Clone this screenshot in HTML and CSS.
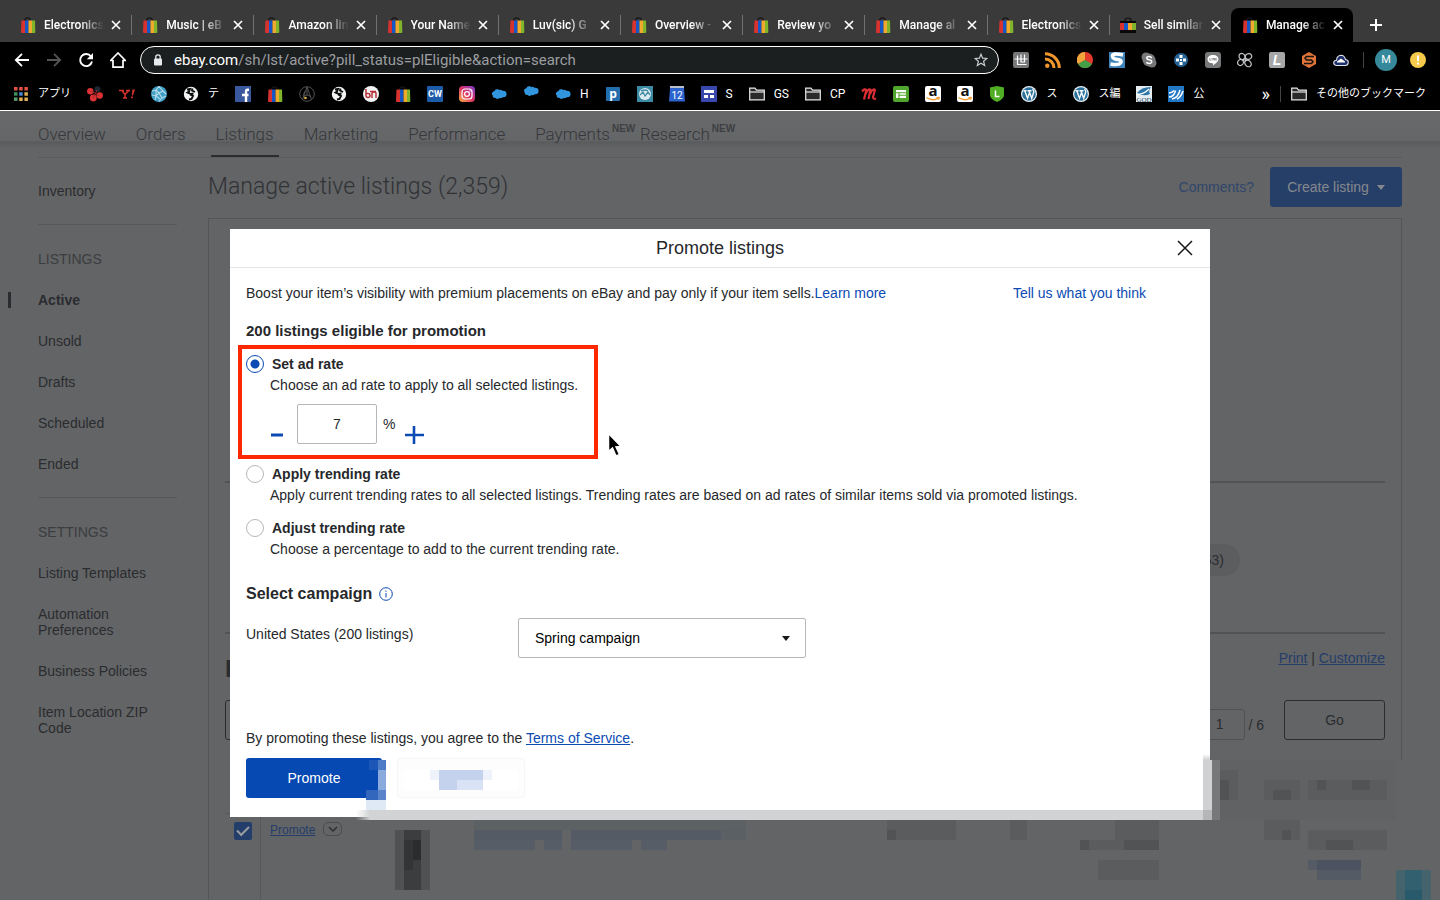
FILE: index.html
```html
<!DOCTYPE html>
<html lang="en">
<head>
    <meta charset="UTF-8">
    <meta name="viewport" content="width=device-width, initial-scale=1.0">
    <title>Manage active listings</title>
    <link rel="stylesheet" href="styles.css">
</head>
<body>

<!-- Shared icons -->
<svg class="sprite" aria-hidden="true">
    <symbol id="bag" viewBox="0 0 16 16">
        <path d="M4.500 5V3.500Q5 .8 7.500 .8T10.500 3.500V5" fill="none" stroke="#161616" stroke-width="1.200"/>
        <path d="M1.500 3.500H5V16H2Q1 16 1 15z" fill="#d8322f"/>
        <path d="M5 3.500h3.500V16H5z" fill="#1657c8"/>
        <path d="M8.500 3.500H12V16H8.500z" fill="#f0a92c"/>
        <path d="M12 3.500h3L15.300 15q0 1-1 1H12z" fill="#7fb52a"/>
    </symbol>
    <symbol id="x" viewBox="0 0 10 10"><path d="M1 1l8 8M9 1L1 9" stroke="currentColor" stroke-width="1.700" fill="none"/></symbol>
    <symbol id="globe" viewBox="0 0 16 16">
        <circle cx="8" cy="8" r="7.200" fill="#f3f4f5"/>
        <path d="M4 3.500L7 3 6 5.500 4.500 6.500 8 8l2.500-.5M9.500 2.500L9 4.500l3 1.500M7 8.500l3 1.500L8.500 13 6 13.500" fill="none" stroke="#0b0b0b" stroke-width="1.900"/>
    </symbol>
    <symbol id="cloud" viewBox="0 0 16 16"><path d="M1 8.200Q.8 5.500 3.300 5.200 4 3 6.200 3.200 7.700 2.900 8.500 4.200 10 3.200 11.500 4.800 15.600 4.600 15.600 8.200 15.400 11.500 11.700 11.200 10.300 12.800 8.300 12 6.500 14 4.700 12 1.500 12.200 1.800 9.800z" fill="#3196dd"/></symbol>
    <symbol id="folder" viewBox="0 0 16 16"><path d="M.7 13.800V2.200H6L7.500 4.200h7.800v9.600z" fill="#2a2a2a" stroke="#e8e8e8" stroke-width="1.200"/><path d="M.7 6h14.600" stroke="#e8e8e8" stroke-width="1.200"/></symbol>
    <symbol id="wp" viewBox="0 0 16 16"><circle cx="8" cy="8" r="8" fill="#e9f2f7"/><circle cx="8" cy="8" r="6.800" fill="#2a709a"/><path d="M2.500 4.800h3M6.500 4.800h4M3.800 4.800l2.700 7.500 2-5.500M8 4.800l2.700 7.500L12.800 6Q12.500 4 11.500 3" fill="none" stroke="#f4f8fa" stroke-width="1.400"/></symbol>
</svg>

<header class="browser">
    <div class="tab-strip">
        <div class="tabs">
            <div class="tab"><svg class="icon"><use href="#bag"/></svg><span class="tab-title">Electronics</span><button class="tab-close" aria-label="Close tab"><svg><use href="#x"/></svg></button></div>
            <div class="tab"><svg class="icon"><use href="#bag"/></svg><span class="tab-title">Music | eB</span><button class="tab-close" aria-label="Close tab"><svg><use href="#x"/></svg></button></div>
            <div class="tab"><svg class="icon"><use href="#bag"/></svg><span class="tab-title">Amazon lin</span><button class="tab-close" aria-label="Close tab"><svg><use href="#x"/></svg></button></div>
            <div class="tab"><svg class="icon"><use href="#bag"/></svg><span class="tab-title">Your Name</span><button class="tab-close" aria-label="Close tab"><svg><use href="#x"/></svg></button></div>
            <div class="tab"><svg class="icon"><use href="#bag"/></svg><span class="tab-title">Luv(sic) G</span><button class="tab-close" aria-label="Close tab"><svg><use href="#x"/></svg></button></div>
            <div class="tab"><svg class="icon"><use href="#bag"/></svg><span class="tab-title">Overview -</span><button class="tab-close" aria-label="Close tab"><svg><use href="#x"/></svg></button></div>
            <div class="tab"><svg class="icon"><use href="#bag"/></svg><span class="tab-title">Review yo</span><button class="tab-close" aria-label="Close tab"><svg><use href="#x"/></svg></button></div>
            <div class="tab"><svg class="icon"><use href="#bag"/></svg><span class="tab-title">Manage al</span><button class="tab-close" aria-label="Close tab"><svg><use href="#x"/></svg></button></div>
            <div class="tab"><svg class="icon"><use href="#bag"/></svg><span class="tab-title">Electronics</span><button class="tab-close" aria-label="Close tab"><svg><use href="#x"/></svg></button></div>
            <div class="tab">
                <svg class="icon" viewBox="0 0 16 16"><path d="M5 6V3Q5.500 1 8 1t3 2V6" fill="none" stroke="#111" stroke-width="1.200"/><path d="M0 4h16v12H0z" fill="#080808"/><path d="M0 6h4v7H0z" fill="#d8322f"/><path d="M4 6h4v7H4z" fill="#1657c8"/><path d="M8 6h4v7H8z" fill="#f0a92c"/><path d="M12 6h4v7h-4z" fill="#7fb52a"/></svg>
                <span class="tab-title">Sell similar</span><button class="tab-close" aria-label="Close tab"><svg><use href="#x"/></svg></button>
            </div>
            <div class="tab active"><svg class="icon"><use href="#bag"/></svg><span class="tab-title">Manage ac</span><button class="tab-close" aria-label="Close tab"><svg><use href="#x"/></svg></button></div>
        </div>
        <button class="new-tab" aria-label="New tab"><svg viewBox="0 0 12 12"><path d="M6 0v12M0 6h12" stroke="#fff" stroke-width="2"/></svg></button>
    </div>

    <div class="toolbar">
        <div class="nav-buttons">
            <button aria-label="Back"><svg class="icon" viewBox="0 0 16 16"><path d="M15 8H2M8 1.800L1.800 8 8 14.200" fill="none" stroke="#fff" stroke-width="1.800"/></svg></button>
            <button aria-label="Forward"><svg class="icon" viewBox="0 0 16 16"><path d="M1 8h13M8 1.800L14.200 8 8 14.200" fill="none" stroke="#555" stroke-width="1.800"/></svg></button>
            <button aria-label="Reload"><svg class="icon" viewBox="0 0 16 16"><path d="M13 4.500A6 6 0 1 0 14 9.500" fill="none" stroke="#fff" stroke-width="1.900"/><path d="M15 1v6.300H8.800z" fill="#fff"/></svg></button>
            <button aria-label="Home"><svg class="icon" viewBox="0 0 16 16"><path d="M.6 8.500L8 1l7.400 7.500H13V15.200H3V8.500z" fill="none" stroke="#fff" stroke-width="1.700"/></svg></button>
        </div>
        <div class="address">
            <svg class="lock" viewBox="0 0 10 12"><rect x="1" y="4.500" width="8" height="7" rx="1" fill="#e8eaed"/><path d="M2.800 5V3a2.200 2.200 0 0 1 4.400 0v2" fill="none" stroke="#e8eaed" stroke-width="1.300"/></svg>
            <span class="url"><b>ebay.com</b>/sh/lst/active?pill_status=plEligible&amp;action=search</span>
            <button aria-label="Bookmark this page"><svg class="star" viewBox="0 0 14 14"><path d="M7 1.200l1.600 4 4.300.3-3.300 2.800 1.100 4.200L7 10.200l-3.700 2.300 1.100-4.200L1.100 5.500l4.300-.3z" fill="none" stroke="#c9cbce" stroke-width="1.200"/></svg></button>
        </div>
        <div class="extensions">
            <svg class="icon" viewBox="0 0 16 16"><rect width="16" height="16" rx="2" fill="#77787a"/><path d="M1.500 7h13M4.500 3.500v9h9M8 2.500v8M11.500 2.500v8M8 10h3.500" fill="none" stroke="#fff" stroke-width="1.200"/></svg>
            <svg class="icon" viewBox="0 0 16 16"><circle cx="2.300" cy="13.700" r="2.200" fill="#f0952b"/><path d="M0 7a9 9 0 0 1 9 9M0 1.700A14.300 14.300 0 0 1 14.300 16" fill="none" stroke="#f0952b" stroke-width="3"/></svg>
            <svg class="icon" viewBox="0 0 16 16"><circle cx="8" cy="8" r="8" fill="#e23a2d"/><path d="M8 8V0A8 8 0 0 0 1 12z" fill="#f0a63a"/><path d="M8 8l-7 4a8 8 0 0 0 14 0z" fill="#43a047"/></svg>
            <svg class="icon" viewBox="0 0 16 16"><path d="M0 0h16v16H0z" fill="#3f83b8"/><path d="M14 3Q3 .5 3.500 4.500 4 7 8.500 7.500q5 .5 3 3.500-2 2.500-10 1" fill="none" stroke="#fff" stroke-width="3.600"/></svg>
            <svg class="icon" viewBox="0 0 16 16"><circle cx="5" cy="5" r="4.500" fill="#77787a"/><circle cx="11" cy="11" r="4.500" fill="#77787a"/><circle cx="8" cy="8" r="6.500" fill="#77787a"/><path d="M10.800 5.800Q8 3.700 6 5.200 5 7 8 7.800q3.500.7 2.500 2.700Q8.500 12.500 5.300 10.300" fill="none" stroke="#fff" stroke-width="1.500"/></svg>
            <svg class="icon" viewBox="0 0 16 16"><circle cx="8" cy="8" r="7" fill="#235f90"/><path d="M6.500 3h3v3h-3zM6.500 10h3v3h-3zM3 6.500h3v3H3zM10 6.500h3v3h-3zM7 7h2v2H7z" fill="#fff"/></svg>
            <svg class="icon" viewBox="0 0 16 16"><rect width="16" height="16" rx="3" fill="#77787a"/><path d="M8 3c3.500 0 5.500 2 5.500 4.300S10.500 11.500 8 13.500l.2-2C4.500 11.500 2.500 9.500 2.500 7.300S4.500 3 8 3z" fill="#fff"/><path d="M4.800 6v2.300H6M7 6v2.300M8.200 8.300V6l1.300 2.300V6M11.700 6.200h-1v2h1M10.700 7.200h1" fill="none" stroke="#77787a" stroke-width=".7"/></svg>
            <svg class="icon" viewBox="0 0 16 16"><g fill="none" stroke="#c3c4c6" stroke-width="1.200"><ellipse cx="5" cy="4.500" rx="2.800" ry="3.200" transform="rotate(-40 5 4.500)"/><ellipse cx="11.500" cy="4.500" rx="2.800" ry="3.200" transform="rotate(60 11.500 4.500)"/><ellipse cx="3.500" cy="10.500" rx="2.800" ry="3" transform="rotate(50 3.500 10.500)"/><ellipse cx="11" cy="11.500" rx="2.800" ry="3.500" transform="rotate(-40 11 11.500)"/><circle cx="7.500" cy="8" r="1.200"/></g></svg>
            <svg class="icon" viewBox="0 0 16 16"><rect width="16" height="16" rx="2" fill="#a5a6a8"/><text x="8" y="13" text-anchor="middle" font-family="Liberation Sans, sans-serif" font-weight="700" font-style="italic" font-size="14" fill="#fff">L</text></svg>
            <svg class="icon" viewBox="0 0 16 16"><path d="M8 0l7 4v8l-7 4-7-4V4z" fill="#e2743a"/><path d="M13 4.500H5.500L4 6l1.500 2h5L12 9.700 10.500 11.500H3" fill="none" stroke="#141414" stroke-width="1.600"/></svg>
            <svg class="icon" viewBox="0 0 16 16"><path d="M3.500 13.500Q.5 13 .7 10.500 1 8.300 3.500 8.200 4 3.500 8 3.300 11.500 3.500 12.500 7.500q3 .5 2.800 3-.3 3-3 3z" fill="#1d2f69" stroke="#dfe2ea" stroke-width="1.100"/><path d="M4 9.500L8 6.500l4 3v1H4z" fill="#fff"/></svg>
        </div>
        <span class="bar-line"></span>
        <span class="avatar">M</span>
        <svg class="icon" viewBox="0 0 16 16"><circle cx="8" cy="8" r="8" fill="#f4c94c"/><path d="M8 3.500v5.500M8 10.500v2" stroke="#fff" stroke-width="2"/></svg>
    </div>

    <nav class="bookmarks">
        <a href="#"><svg class="icon" viewBox="0 0 16 16"><path d="M1 1h3.500v3.500H1zM6.200 1h3.500v3.500H6.200zM11.400 1h3.500v3.500h-3.500z" fill="#e05242"/><path d="M1 6.200h3.500v3.500H1z" fill="#3f8f5a"/><path d="M6.200 6.200h3.500v3.500H6.200z" fill="#4b86d8"/><path d="M11.400 6.200h3.500v3.500h-3.500zM6.200 11.400h3.500v3.500H6.200zM11.400 11.400h3.500v3.500h-3.500z" fill="#e0ad55"/><path d="M1 11.400h3.500v3.500H1z" fill="#5b9a6c"/></svg><span class="jp">アプリ</span></a>
        <a href="#" aria-label="Bookmark"><svg class="icon" viewBox="0 0 16 16"><circle cx="3.300" cy="5.200" r="3.200" fill="#dc3235"/><circle cx="10.500" cy="3.300" r="3" fill="#1d2833"/><circle cx="12.700" cy="9.500" r="3.200" fill="#dc3235"/><circle cx="6.300" cy="12" r="3.400" fill="#dc3235"/><path d="M4 5l8 4.500M10 4L6.500 12" stroke="#a02a2d"/></svg></a>
        <a href="#" aria-label="Yahoo"><svg class="icon" viewBox="0 0 16 16"><path d="M0 4.500h5M7 4.500h4M3 4.500l3 4V12M10 4.500L6 8.500M4 12h4" fill="none" stroke="#d8332c" stroke-width="1.500"/><path d="M13.500 3.500H16l-2 6h-1.200zM12 10.500h1.800v1.700H12z" fill="#d8332c"/></svg></a>
        <a href="#" aria-label="Bookmark"><svg class="icon" viewBox="0 0 16 16"><circle cx="8" cy="8" r="8" fill="#3f9fc6"/><path d="M1 5l4-1 3 3 4-2 3 3M1 9l4 1 3-3 3 5 4-2M5 4L8 .5l4 4.500M5 10l-1 4M11 12l-3 3.500M5 4v6l4 3" fill="none" stroke="#b7dbe9" stroke-width="1.100"/></svg></a>
        <a href="#"><svg class="icon"><use href="#globe"/></svg><span class="jp">テ</span></a>
        <a href="#" aria-label="Facebook"><svg class="icon" viewBox="0 0 16 16"><path d="M0 0h16v16H0z" fill="#3a589e"/><path d="M11 16V9.500M7 9h6.500M14 3.800h-1.300Q11 3.800 11 6v5" fill="none" stroke="#fff" stroke-width="2.400"/></svg></a>
        <a href="#" aria-label="eBay"><svg class="icon"><use href="#bag"/></svg></a>
        <a href="#" aria-label="Bookmark"><svg class="icon" viewBox="0 0 16 16"><g fill="none" stroke="#525252"><circle cx="8" cy="8" r="7.300"/><path d="M8 1L3.500 13.500M8 1l4.500 12.500M8 1v8M4 11q4-4 8 0M6 5q-3 3 0 8"/></g><circle cx="6.500" cy="12" r="1.300" fill="#d8ad3c"/></svg></a>
        <a href="#" aria-label="Bookmark"><svg class="icon"><use href="#globe"/></svg></a>
        <a href="#" aria-label="Bookmark"><svg class="icon" viewBox="0 0 16 16"><circle cx="8" cy="8" r="8" fill="#f4f3f3"/><path d="M3 3v6.500a2 2 0 1 0 2-2H3M9 12V7q2.500-2 4 0v5M7 5.500h6" fill="none" stroke="#b7343b" stroke-width="1.500"/></svg></a>
        <a href="#" aria-label="eBay"><svg class="icon"><use href="#bag"/></svg></a>
        <a href="#" aria-label="CW"><svg class="icon" viewBox="0 0 16 16"><rect width="16" height="16" rx="1" fill="#1d5ca8"/><text x="8" y="11.300" text-anchor="middle" font-family="Roboto, sans-serif" font-weight="700" font-size="9" fill="#fff">CW</text></svg></a>
        <a href="#" aria-label="Instagram"><svg class="icon" viewBox="0 0 16 16"><defs><linearGradient id="insta" x1="0" y1="1" x2="1" y2="0"><stop stop-color="#fbb440"/><stop offset=".5" stop-color="#dc3067"/><stop offset="1" stop-color="#7a3fd0"/></linearGradient></defs><rect width="16" height="16" rx="4" fill="url(#insta)"/><rect x="3" y="3" width="10" height="10" rx="3" fill="none" stroke="#fff" stroke-width="1.200"/><circle cx="8" cy="8" r="2.400" fill="none" stroke="#fff" stroke-width="1.200"/><circle cx="11" cy="5" r=".7" fill="#fff"/></svg></a>
        <a href="#" aria-label="Salesforce"><svg class="icon"><use href="#cloud"/></svg></a>
        <a href="#" aria-label="Salesforce"><svg class="icon" viewBox="0 3 16 16"><use href="#cloud" width="16" height="16"/></svg></a>
        <a href="#"><svg class="icon"><use href="#cloud"/></svg><span>H</span></a>
        <a href="#" aria-label="P"><svg class="icon" viewBox="0 0 16 16"><rect x="1" y="1" width="14" height="14" rx="1" fill="#236fae"/><text x="8" y="11.500" text-anchor="middle" font-family="Open Sans, sans-serif" font-weight="700" font-size="12" fill="#fff">p</text></svg></a>
        <a href="#" aria-label="Bookmark"><svg class="icon" viewBox="0 0 16 16"><path d="M0 0h16v16H0z" fill="#3d8aa5"/><circle cx="8" cy="8" r="6" fill="#dcebf0"/><path d="M3 9l3-3 2 4 3-4 2 3M4 5q4-2 7 0" fill="none" stroke="#3d8aa5" stroke-width="1.300"/></svg></a>
        <a href="#" aria-label="Calendar"><svg class="icon" viewBox="0 0 16 16"><path d="M1 0h14v4H1z" fill="#b9c0cc"/><path d="M1 2h14l1 13.500H0z" fill="#2d63cf"/><text x="8" y="12.500" text-anchor="middle" font-family="Roboto, sans-serif" font-size="10" fill="#fff">12</text></svg></a>
        <a href="#"><svg class="icon" viewBox="0 0 16 16"><path d="M0 0h16v16H0z" fill="#3848ac"/><path d="M3 4h10v3H3zM3 9h4v3H3zM9 9h4v3H9z" fill="#fff"/></svg><span>S</span></a>
        <a href="#"><svg class="icon"><use href="#folder"/></svg><span>GS</span></a>
        <a href="#"><svg class="icon"><use href="#folder"/></svg><span>CP</span></a>
        <a href="#" aria-label="m"><svg class="icon" viewBox="0 0 16 16"><path d="M1 5.500Q4 2 5.300 4L3 13.500M4.500 8Q7.500 2 9.500 3.700L7.500 13M9 8q3-6 5-4l-2 7q0 2.500 3 1.500" fill="none" stroke="#da2f35" stroke-width="2.200" stroke-linejoin="round"/></svg></a>
        <a href="#" aria-label="Bookmark"><svg class="icon" viewBox="0 0 16 16"><rect width="16" height="16" rx="2" fill="#4fa52d"/><path d="M3 4h10v8H3z" fill="#fff"/><path d="M3 6.800h10M6 6.800V12M6 9.300h7" stroke="#4fa52d" stroke-width="1.100"/></svg></a>
        <a href="#" aria-label="Amazon"><svg class="icon" viewBox="0 0 16 16"><rect width="16" height="16" rx="2" fill="#fff"/><text x="8" y="10" text-anchor="middle" font-family="Open Sans, sans-serif" font-weight="700" font-size="15" fill="#111">a</text><path d="M1.500 11.500Q8 15.800 13.500 12M11.500 11.600l2.600-.2-.5 2.400" fill="none" stroke="#f29a2e" stroke-width="1.300"/></svg></a>
        <a href="#" aria-label="Amazon"><svg class="icon" viewBox="0 0 16 16"><rect width="16" height="16" rx="2" fill="#fff"/><text x="8" y="10" text-anchor="middle" font-family="Open Sans, sans-serif" font-weight="700" font-size="15" fill="#111">a</text><path d="M1.500 11.500Q8 15.800 13.500 12M11.500 11.600l2.600-.2-.5 2.400" fill="none" stroke="#f29a2e" stroke-width="1.300"/></svg></a>
        <a href="#" aria-label="L"><svg class="icon" viewBox="0 0 16 16"><path d="M8 0l7 1.500V9q0 4-7 7-7-3-7-7V1.500z" fill="#4fae24"/><path d="M6.500 4.500v6h4" fill="none" stroke="#fff" stroke-width="1.500"/></svg></a>
        <a href="#"><svg class="icon"><use href="#wp"/></svg><span class="jp">ス</span></a>
        <a href="#"><svg class="icon"><use href="#wp"/></svg><span class="jp">ス編</span></a>
        <a href="#" aria-label="GOD"><svg class="icon" viewBox="0 0 16 16"><path d="M0 0h16v16H0z" fill="#e6eef2"/><path d="M1 7Q5 1 15 1 12 5 14 8 8 11 1 7z" fill="#2c76a8"/><path d="M0 8.500Q8 8.500 13 3" fill="none" stroke="#fff" stroke-width="1.200"/><text x="8" y="15.500" text-anchor="middle" font-family="Liberation Serif, serif" font-size="7" fill="#24435c">GOD</text></svg></a>
        <a href="#"><svg class="icon" viewBox="0 0 16 16"><path d="M0 0h16v16H0z" fill="#2378c6"/><path d="M1 11Q6 11 7.500 4.500M4 13q6-1 8-9M9 13q4-2 6-8M1 7q3 0 5-2.500" fill="none" stroke="#fff" stroke-width="1.500"/></svg><span class="jp">公</span></a>
        <button class="overflow" aria-label="More bookmarks">»</button>
        <span class="bar-line"></span>
        <a href="#"><svg class="icon"><use href="#folder"/></svg><span class="jp">その他のブックマーク</span></a>
    </nav>
</header>

<div class="page">
    <nav class="hub-nav">
        <a href="#">Overview</a>
        <a href="#">Orders</a>
        <a href="#" class="current">Listings</a>
        <a href="#">Marketing</a>
        <a href="#">Performance</a>
        <a href="#">Payments<sup>NEW</sup></a>
        <a href="#">Research<sup>NEW</sup></a>
    </nav>

    <div class="columns">
        <aside class="sidebar">
            <a href="#">Inventory</a>
            <hr>
            <h2>LISTINGS</h2>
            <a href="#" class="current">Active</a>
            <a href="#">Unsold</a>
            <a href="#">Drafts</a>
            <a href="#">Scheduled</a>
            <a href="#">Ended</a>
            <hr>
            <h2>SETTINGS</h2>
            <a href="#">Listing Templates</a>
            <a href="#">Automation Preferences</a>
            <a href="#">Business Policies</a>
            <a href="#">Item Location ZIP Code</a>
        </aside>

        <main class="listings">
            <div class="title-row">
                <h1>Manage active listings (2,359)</h1>
                <a href="#">Comments?</a>
                <button class="create">Create listing <i class="caret"></i></button>
            </div>
            <div class="panel">
                <div class="filters"></div>
                <div class="status-row"><span class="pill">(53)</span></div>
                <div class="results-row">
                    <h2>R</h2>
                    <p><a href="#">Print</a> | <a href="#">Customize</a></p>
                </div>
                <div class="paging-row">
                    <button class="outline">A</button>
                    <label class="pager"><input type="text" value="1" aria-label="Page"> / 6</label>
                    <button class="outline go">Go</button>
                </div>
                <div class="grid-row">
                    <div class="check-cell"><input type="checkbox" checked aria-label="Select listing"></div>
                    <div class="action-cell"><a href="#">Promote</a><button aria-label="More actions"><svg viewBox="0 0 10 6"><path d="M1 1l4 4 4-4" fill="none" stroke="#292b2e" stroke-width="1.400"/></svg></button></div>
                </div>
            </div>
        </main>
    </div>

    <!-- Masked table cells -->
    <svg class="mosaic" viewBox="0 755 1440 145" aria-hidden="true">
        <path fill="#616264" d="M1220 760h176v60h-176z"/>
        <path fill="#636466" d="M1396 760h9v140h-9z"/>
        <path fill="#505153" d="M395 830h35v60h-35z"/>
        <path fill="#3c3d3f" d="M404 830h17v60h-17z"/>
        <path fill="#2b2c2e" d="M413 840h8v20h-8z"/>
        <path fill="#333436" d="M404 840h9v30h-9z"/>
        <path fill="#5c6163" d="M474 820h272v10H474z"/>
        <path fill="#545b65" d="M474 830h88v10h-88zM571 830h150v10H571z"/>
        <path fill="#5a6064" d="M721 830h25v10h-25z"/>
        <path fill="#575d66" d="M474 840h61v10h-61zM544 840h18v10h-18zM571 840h61v10h-61zM641 840h26v10h-26z"/>
        <path fill="#5b5c5e" d="M887 820h69v20h-69zM1010 820h17v20h-17zM1115 820h44v30h-44zM1080 840h35v10h-35zM1098 860h61v20h-61zM1220 770h18v30h-18zM1264 780h36v20h-36zM1308 780h79v20h-79zM1264 820h36v20h-36zM1308 830h79v20h-79z"/>
        <path fill="#525355" d="M887 830h9v10h-9zM1080 840h9v10h-9zM1124 840h35v10h-35zM1220 780h9v20h-9zM1273 790h18v10h-18zM1317 780h9v10h-9zM1352 780h18v10h-18zM1326 840h27v10h-27zM1282 830h9v10h-9z"/>
        <path fill="#4b5361" d="M1317 860h44v10h-44z"/>
        <path fill="#555b64" d="M1308 860h9v10h-9zM1317 870h44v10h-44z"/>
        <path fill="#44636d" d="M1396 870h35v30h-35z"/>
        <path fill="#32606e" d="M1405 870h17v30h-17z"/>
        <path fill="#285a6c" d="M1405 890h17v10h-17z"/>
    </svg>

    <section class="modal" role="dialog" aria-labelledby="modal-title">
        <header class="modal-header">
            <h2 id="modal-title">Promote listings</h2>
            <button class="modal-close" aria-label="Close"><svg viewBox="0 0 16 16"><path d="M1 1l14 14M15 1L1 15" stroke="#191919" stroke-width="1.500"/></svg></button>
        </header>
        <form class="modal-body">
            <div class="intro">
                <p>Boost your item’s visibility with premium placements on eBay and pay only if your item sells.<a href="#">Learn more</a></p>
                <a href="#">Tell us what you think</a>
            </div>
            <h3>200 listings eligible for promotion</h3>

            <div class="option highlight">
                <input type="radio" name="rate" id="set-rate" checked>
                <label for="set-rate">Set ad rate</label>
                <p>Choose an ad rate to apply to all selected listings.</p>
                <div class="rate">
                    <button type="button" class="step" aria-label="Decrease"><svg viewBox="0 0 12 20"><path d="M0 11h12" stroke="#0b4bb3" stroke-width="3"/></svg></button>
                    <input type="text" value="7" aria-label="Ad rate">
                    <span>%</span>
                    <button type="button" class="step plus" aria-label="Increase"><svg viewBox="0 0 20 20"><path d="M10 2v18M1 11h19" stroke="#0b4bb3" stroke-width="2.600"/></svg></button>
                </div>
            </div>
            <div class="option">
                <input type="radio" name="rate" id="apply-rate">
                <label for="apply-rate">Apply trending rate</label>
                <p>Apply current trending rates to all selected listings. Trending rates are based on ad rates of similar items sold via promoted listings.</p>
            </div>
            <div class="option">
                <input type="radio" name="rate" id="adjust-rate">
                <label for="adjust-rate">Adjust trending rate</label>
                <p>Choose a percentage to add to the current trending rate.</p>
            </div>

            <h4>Select campaign <svg viewBox="0 0 14 14"><circle cx="7" cy="7" r="6.300" fill="none" stroke="#0b4bb3"/><path d="M7 6v4.500M7 3.500v1.300" stroke="#0b4bb3"/></svg></h4>
            <div class="campaign">
                <label for="campaign">United States (200 listings)</label>
                <div class="select-box">
                    <select id="campaign"><option>Spring campaign</option></select>
                </div>
            </div>

            <p class="terms">By promoting these listings, you agree to the <a href="#">Terms of Service</a>.</p>
            <div class="actions">
                <button type="button" class="primary">Promote</button>
                <button type="button" class="ghost" aria-label="Cancel"></button>
            </div>
        </form>

        <!-- Masked strip along the lower edge -->
        <svg class="modal-mosaic" viewBox="350 750 870 70" aria-hidden="true">
            <defs>
                <linearGradient id="fade"><stop stop-color="#d2d3d4" stop-opacity="0"/><stop offset="1" stop-color="#d2d3d4"/></linearGradient>
                <linearGradient id="edge" x1="0" y1="0" x2="0" y2="1"><stop stop-color="#d0d1d3" stop-opacity="0"/><stop offset="1" stop-color="#d0d1d3"/></linearGradient>
            </defs>
            <path fill="url(#fade)" d="M356 810h14v10h-14z"/>
            <path fill="#d2d3d4" d="M370 810h833v10H370z"/>
            <path fill="url(#edge)" d="M1203 754h7v6h-7z"/>
            <path fill="#d0d1d3" d="M1203 760h9v50h-9z"/>
            <path fill="#b5b6b8" d="M1203 810h9v10h-9z"/>
            <path fill="#77787a" d="M1212 760h8v60h-8z"/>
            <path fill="#1c57b7" d="M369 760h9v10h-9z"/>
            <path fill="#3367bd" d="M366 790h12v10h-12z"/>
            <path fill="#4f7cc7" d="M378 760h8v10h-8z"/>
            <path fill="#8aa9dc" d="M378 770h8v20h-8z"/>
            <path fill="#5a83c9" d="M378 790h8v10h-8z"/>
            <path fill="#dfe8f5" d="M366 800h20v10h-20z"/>
            <path fill="#fff" d="M404 770h114v20H404z"/>
            <path fill="#eef2fa" d="M430 770h9v10h-9zM483 770h9v10h-9z"/>
            <path fill="#c5d2ee" d="M439 770h44v20h-44z"/>
            <path fill="#d9e3f5" d="M457 780h26v10h-26z"/>
        </svg>

        <svg class="pointer" viewBox="0 0 16 26" aria-hidden="true"><path d="M1.500 1.500v18l4-3.500 3.500 8 3.500-1.500-3.500-7.500 5-.5z" fill="#000" stroke="#fff" stroke-width="1.500"/></svg>
    </section>
</div>

</body>
</html>
```
FILE: styles.css
```css
* {
    box-sizing: border-box;
}
body {
    margin: 0;
    height: 100vh;
    display: flex;
    flex-direction: column;
    overflow: hidden;
    font-family: "Liberation Sans", Arial, sans-serif;
    font-size: 14px;
    line-height: 16px;
    color: #2a2c2f;
}
h1, h2, h3, h4, p {
    margin: 0;
}
a {
    color: inherit;
    text-decoration: none;
}
button {
    padding: 0;
    border: none;
    background: none;
    font: inherit;
    color: inherit;
    cursor: pointer;
}
svg {
    display: block;
    flex: none;
}
.sprite {
    position: absolute;
    width: 0;
    height: 0;
}
.icon {
    width: 16px;
    height: 16px;
}

/* Browser window */
.browser {
    background: #000;
    color: #fff;
    font-family: Roboto, "Noto Sans CJK JP", sans-serif;
    border-bottom: 1px solid #fff;
}
.tab-strip {
    display: flex;
    height: 42px;
    padding: 8px 58px 0 9px;
    background: #3a3a3a;
}
.tabs {
    display: flex;
    flex: 1;
    min-width: 0;
}
.tab {
    position: relative;
    display: flex;
    flex: 1;
    min-width: 0;
    align-items: center;
    padding: 0 10px 0 11px;
    border-radius: 8px 8px 0 0;
    font-size: 12px;
    font-weight: 500;
}
.tab + .tab::before {
    content: "";
    position: absolute;
    left: 0;
    top: 7px;
    width: 1px;
    height: 20px;
    background: #717171;
}
.tab.active {
    background: #000;
}
.tab.active::before {
    display: none;
}
.tab-title {
    flex: 1;
    min-width: 0;
    margin: 0 7px 0 8px;
    overflow: hidden;
    white-space: nowrap;
    mask-image: linear-gradient(to right, #000 60%, transparent);
}
.tab-close svg {
    width: 10px;
    height: 10px;
}
.new-tab {
    padding: 0 0 0 17px;
}
.new-tab svg {
    width: 12px;
    height: 12px;
}
.toolbar {
    display: flex;
    align-items: center;
    height: 36px;
    padding: 0 14px;
}
.nav-buttons, .extensions {
    display: flex;
    gap: 16px;
}
.address {
    display: flex;
    flex: 1;
    align-items: center;
    height: 28px;
    margin: 0 14px;
    padding: 0 10px 0 12px;
    border: 1px solid #fff;
    border-radius: 14px;
    background: #1c1f20;
    color: #9b9da0;
    font-size: 15px;
}
.address b {
    font-weight: 400;
    color: #fff;
}
.lock {
    width: 10px;
    height: 12px;
}
.url {
    flex: 1;
    margin-left: 11px;
}
.star {
    width: 14px;
    height: 14px;
}
.bar-line {
    width: 1px;
    height: 16px;
    background: #444;
}
.toolbar .bar-line {
    margin: 0 11px 0 14px;
}
.avatar {
    width: 22px;
    height: 22px;
    margin-right: 13px;
    border-radius: 50%;
    background: #36899a;
    font-size: 11px;
    line-height: 22px;
    text-align: center;
}
.bookmarks {
    display: flex;
    align-items: center;
    gap: 16px;
    height: 32px;
    padding: 0 14px 0 13px;
    font-size: 12px;
    white-space: nowrap;
}
.bookmarks a {
    display: flex;
    align-items: center;
    gap: 9px;
}
.jp {
    font-size: 11px;
}
.overflow {
    margin-left: auto;
    font-size: 18px;
}
.bookmarks .bar-line {
    margin: 0 -6px;
}

/* Page behind the dialog */
.page {
    position: relative;
    flex: 1;
    overflow: hidden;
    background: linear-gradient(#67686a, #656668 29px, #5a5b5d 31px, #636466 38px, #636466);
}
.hub-nav {
    display: flex;
    gap: 20px;
    height: 47px;
    margin: 0 38px;
    border-bottom: 1px solid #5a5b5d;
    font-family: Roboto, sans-serif;
    font-size: 17px;
    font-weight: 300;
    line-height: 47px;
    color: #35373a;
}
.hub-nav a {
    position: relative;
    margin: 0 -5px;
    padding: 0 5px;
}
.hub-nav a + a {
    margin-left: 5px;
}
.hub-nav .current {
    border-bottom: 2px solid #2a2c2f;
}
.hub-nav sup {
    position: absolute;
    left: 100%;
    top: 12px;
    margin-left: -3px;
    font-family: "Liberation Sans", sans-serif;
    font-size: 10px;
    font-weight: 700;
    line-height: 12px;
    color: #3d3f42;
}
.columns {
    display: flex;
    margin: 0 38px;
}
.sidebar {
    width: 139px;
    margin-right: 31px;
    padding-top: 25px;
}
.sidebar a {
    position: relative;
    display: block;
    margin-bottom: 25px;
    padding-right: 20px;
}
.sidebar h2 {
    margin-bottom: 25px;
    font-size: 14px;
    font-weight: 400;
    line-height: 16px;
    color: #3b3d40;
}
.sidebar hr {
    margin: 0 0 26px;
    border: none;
    border-top: 1px solid #57585a;
}
.sidebar .current {
    font-weight: 700;
}
.sidebar .current::before {
    content: "";
    position: absolute;
    left: -30px;
    top: 0;
    width: 3px;
    height: 16px;
    background: #2a2c2f;
}
.listings {
    flex: 1;
}
.title-row {
    display: flex;
    align-items: center;
    gap: 16px;
    padding: 9px 0 11px;
    color: #30466b;
}
.title-row h1 {
    flex: 1;
    font-family: Roboto, sans-serif;
    font-size: 23px;
    font-weight: 300;
    line-height: 24px;
    color: #303235;
}
.create {
    width: 132px;
    height: 40px;
    border-radius: 3px;
    background: #263f69;
    color: #85888d;
}
.caret {
    display: inline-block;
    margin: 0 0 2px 4px;
    border: 4px solid transparent;
    border-top: 5px solid;
    border-bottom: none;
}
.panel {
    border: 1px solid #545557;
    border-bottom: none;
    padding: 0 16px;
    height: 800px;
}
.filters {
    height: 264px;
    border-bottom: 2px solid #525355;
}
.status-row {
    height: 151px;
    padding: 61px 145px 0 0;
    border-bottom: 2px solid #525355;
    text-align: right;
}
.pill {
    display: inline-block;
    padding: 8px 16px;
    border-radius: 16px;
    background: #5c5d5f;
}
.results-row {
    display: flex;
    justify-content: space-between;
    padding: 16px 0 26px;
}
.results-row h2 {
    font-size: 24px;
    line-height: 38px;
}
.results-row a {
    color: #243d69;
    text-decoration: underline;
}
.paging-row {
    display: flex;
    align-items: center;
    height: 40px;
    margin-top: -14px;
}
.outline {
    height: 40px;
    padding: 0 16px;
    border: 1px solid #2a2c2f;
    border-radius: 3px;
}
.go {
    width: 101px;
}
.pager {
    margin: 8px 20px 0 auto;
}
.pager input {
    width: 50px;
    height: 31px;
    border: 1px solid #505153;
    border-radius: 3px;
    background: none;
    color: inherit;
    font: inherit;
    text-align: center;
}
.grid-row {
    display: flex;
    margin-top: 73px;
    border-top: 1px solid #57585a;
}
.check-cell {
    width: 36px;
    height: 100px;
    padding: 8px 9px;
    border-right: 1px solid #57585a;
}
.check-cell input {
    appearance: none;
    display: grid;
    place-items: center;
    width: 18px;
    height: 18px;
    margin: 0;
    border-radius: 2px;
    background: #243e6b;
}
.check-cell input::before {
    content: "";
    width: 10px;
    height: 5px;
    margin-bottom: 3px;
    border-left: 2px solid #999b9e;
    border-bottom: 2px solid #999b9e;
    rotate: -45deg;
}
.action-cell {
    display: flex;
    gap: 8px;
    padding: 8px 9px;
    font-size: 12px;
    color: #243d69;
    text-decoration: underline;
}
.action-cell button {
    display: grid;
    place-items: center;
    width: 19px;
    height: 14px;
    border: 1px solid #4b4c4e;
    border-radius: 5px;
}
.action-cell svg {
    width: 10px;
    height: 6px;
}
.mosaic {
    position: absolute;
    left: 0;
    top: 644px;
    width: 1440px;
    height: 145px;
}

/* Promote dialog */
.modal {
    position: absolute;
    top: 118px;
    left: 0;
    right: 0;
    width: 980px;
    max-width: 96%;
    margin: 0 auto;
    background: #fff;
    color: #26282b;
}
.modal a {
    color: #0b4bb3;
}
.modal-header {
    display: flex;
    align-items: center;
    height: 39px;
    padding: 0 17px;
    border-bottom: 1px solid #e5e5e5;
}
.modal-header h2 {
    flex: 1;
    margin-left: 16px;
    font-size: 18px;
    font-weight: 400;
    text-align: center;
}
.modal-close svg {
    width: 16px;
    height: 16px;
}
.modal-body {
    padding: 17px 16px 19px;
}
.intro {
    display: flex;
    justify-content: space-between;
    padding-right: 48px;
}
h3 {
    margin-top: 22px;
    font-size: 15px;
    line-height: 16px;
}
.option {
    display: grid;
    grid-template-columns: 18px 1fr;
    column-gap: 8px;
    row-gap: 4px;
    align-items: center;
    margin-bottom: 16px;
}
.option label {
    font-weight: 700;
}
.option p {
    grid-column: 1 / -1;
    margin-left: 24px;
}
.option input[type="radio"] {
    appearance: none;
    width: 18px;
    height: 18px;
    margin: 0;
    border: 1px solid #b5b7ba;
    border-radius: 50%;
}
.option input[type="radio"]:checked {
    border-color: #0b4bb3;
    background: radial-gradient(#0b4bb3 4px, transparent 5px);
}
.highlight {
    width: 360px;
    margin: 6px 0 6px -8px;
    padding: 6px 4px 11px;
    border: 4px solid #fe2800;
}
.rate {
    grid-column: 1 / -1;
    display: flex;
    align-items: center;
    margin: 7px 0 0 25px;
}
.rate input {
    width: 80px;
    height: 40px;
    margin: 0 6px 0 14px;
    border: 1px solid #b5b7ba;
    border-radius: 2px;
    font: inherit;
    color: inherit;
    text-align: center;
}
.step {
    align-self: flex-end;
}
.step svg {
    width: 12px;
    height: 20px;
}
.step.plus {
    margin-left: 9px;
}
.step.plus svg {
    width: 20px;
}
h4 {
    display: flex;
    align-items: center;
    gap: 7px;
    margin-top: 27px;
    font-size: 16px;
    line-height: 20px;
}
h4 svg {
    width: 14px;
    height: 14px;
}
.campaign {
    display: flex;
    margin-top: 14px;
}
.campaign label {
    width: 272px;
    padding-top: 8px;
}
.select-box {
    position: relative;
    width: 288px;
}
.select-box select {
    appearance: none;
    width: 100%;
    height: 40px;
    padding: 0 16px;
    border: 1px solid #b5b7ba;
    border-radius: 2px;
    background: #fff;
    font: inherit;
    color: #000;
}
.select-box::after {
    content: "";
    position: absolute;
    right: 16px;
    top: 18px;
    border: 4px solid transparent;
    border-top: 5px solid #191919;
    border-bottom: none;
    pointer-events: none;
}
.terms {
    margin-top: 72px;
}
.terms a {
    text-decoration: underline;
}
.actions {
    display: flex;
    gap: 15px;
    margin-top: 12px;
}
.primary, .ghost {
    height: 40px;
    border-radius: 3px;
}
.primary {
    width: 136px;
    background: #0649b2;
    color: #fff;
}
.ghost {
    width: 128px;
    border: 1px solid #f6f6f8;
    background: #fdfdfe;
}
.modal-mosaic {
    position: absolute;
    right: -10px;
    bottom: -3px;
    width: 870px;
    height: 70px;
    pointer-events: none;
}
.pointer {
    position: absolute;
    left: 377px;
    top: 203px;
    width: 16px;
    height: 26px;
}
```
